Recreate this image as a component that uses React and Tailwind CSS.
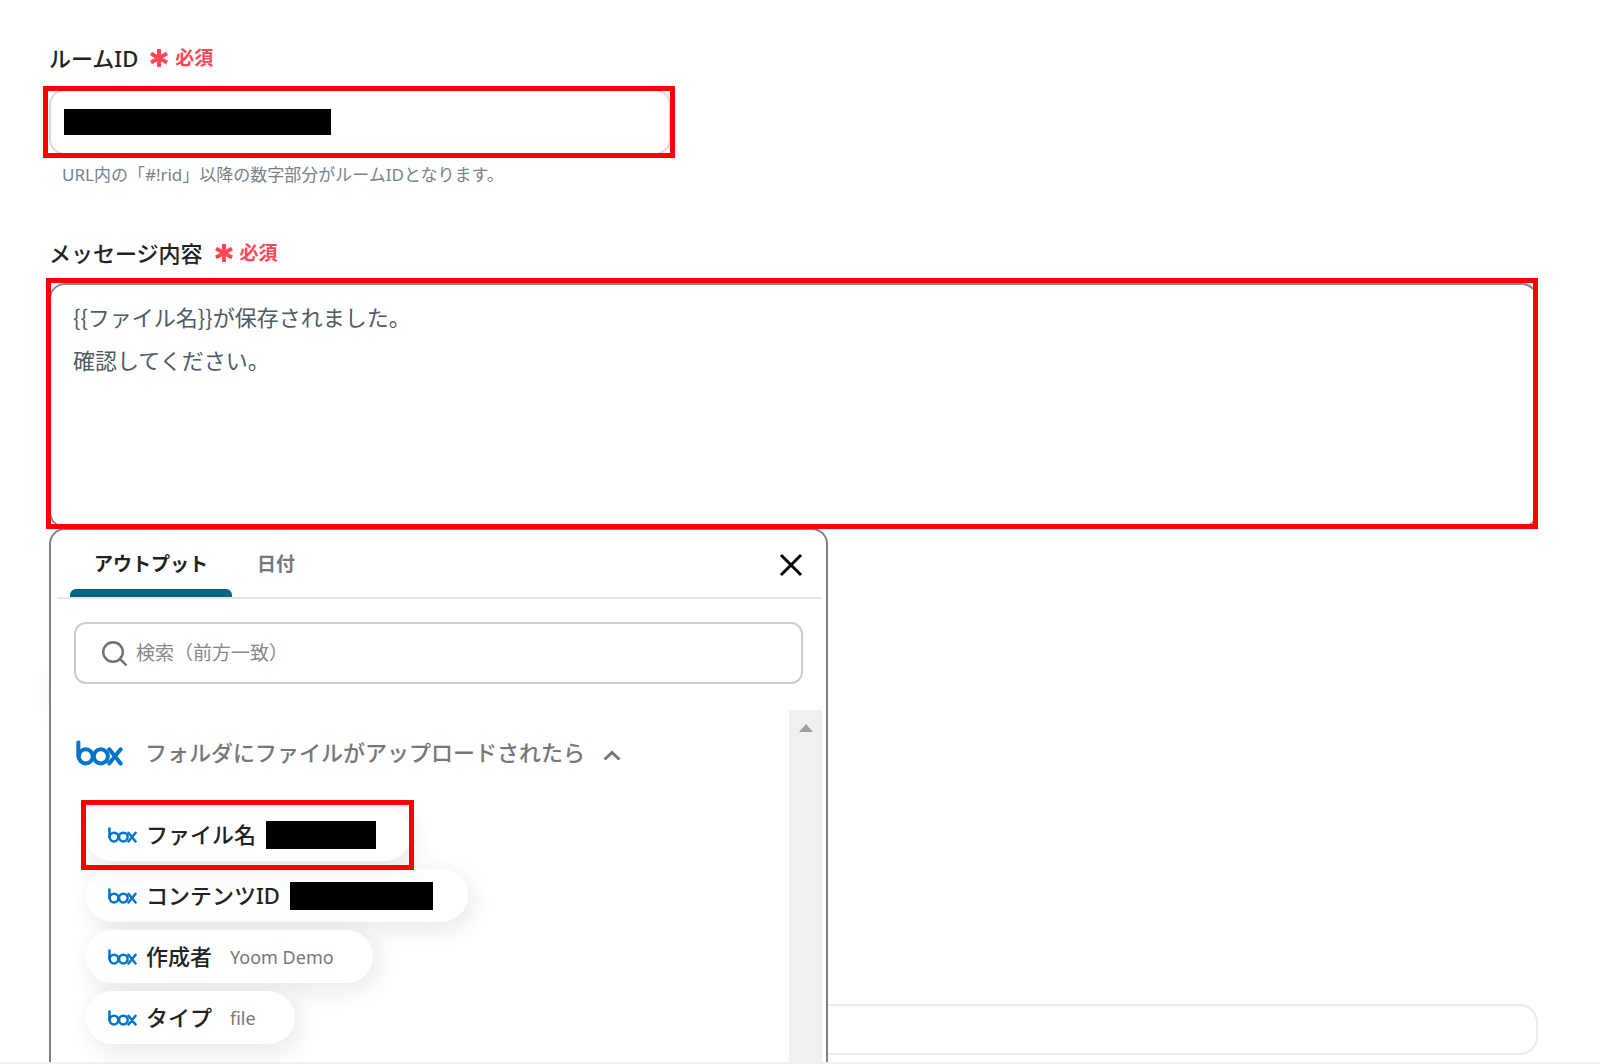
import React, { useState } from 'react';

const chips = [
    { label: 'ファイル名', barClass: 'w-[110px]' },
    { label: 'コンテンツID', barClass: 'w-[143px]' },
    { label: '作成者', value: 'Yoom Demo' },
    { label: 'タイプ', value: 'file' }
];

function BoxLogo({ className }) {
    return (
        <svg viewBox="0 0 140 76" className={className} fill="none" stroke="#0075c9" strokeWidth="12" strokeLinecap="round" aria-label="box" role="img">
            <path d="M7 7v41" />
            <circle cx="29" cy="48" r="21" />
            <circle cx="74" cy="48" r="21" />
            <path d="M99 27l34 42M133 27l-34 42" />
        </svg>
    );
}

function Required() {
    return (
        <span className="flex items-center gap-[7px] text-[19px] leading-7 font-bold text-[#ff4757]">
            <svg viewBox="0 0 18 18" className="w-[18px] h-[18px]" stroke="currentColor" strokeWidth="4" aria-hidden="true">
                <path d="M9 0v18M1 4.5l16 9M17 4.5l-16 9" />
            </svg>
            必須
        </span>
    );
}

function FieldLabel({ htmlFor, children }) {
    return (
        <div className="flex items-center gap-3">
            <label htmlFor={htmlFor} className="text-[22px] leading-8 font-medium text-[#222]">{children}</label>
            <Required />
        </div>
    );
}

// Annotation frame drawn over the element it marks
function Highlight({ className }) {
    return <div className={`absolute pointer-events-none border-[5px] border-[#ff0000] ${className}`} />;
}

function Chip({ label, value, barClass, marked }) {
    return (
        <li className={marked ? 'relative z-10' : 'relative'}>
            <button className="flex items-center h-[53px] pl-[22px] pr-[35px] rounded-full bg-white shadow-[4px_6px_28px_rgba(0,0,0,0.10)]">
                <BoxLogo className="w-[29px] h-4 mr-[9px]" />
                <span className="pb-0.5 text-[22px] leading-8 font-medium text-[#222]">{label}</span>
                {value && <span className="ml-[18px] pr-1 text-[18px] leading-7 text-[#777]">{value}</span>}
                {barClass && <span className={`h-7 ml-[10px] bg-black ${barClass}`} />}
            </button>
            {marked && <Highlight className="-left-[5px] -right-[3px] -top-[8px] -bottom-[9px]" />}
        </li>
    );
}

function OutputPicker() {
    const [tab, setTab] = useState('output');
    const [open, setOpen] = useState(true);

    return (
        <div className="absolute top-full left-0 w-[779px] pl-[6px] pr-1 bg-white border-2 border-b-0 border-[#808080] rounded-t-2xl">
            <div className="flex items-end h-[69px] pl-[13px] pr-[19px] border-b-2 border-[#e6e6e6]">
                <button
                    onClick={() => setTab('output')}
                    className="flex flex-col w-[162px] text-[19px] leading-7 font-bold text-[#222]"
                >
                    <span className="w-full pb-[11px]">アウトプット</span>
                    <span className={`w-full h-2 rounded-t-md ${tab === 'output' ? 'bg-[#05687f]' : ''}`} />
                </button>
                <button
                    onClick={() => setTab('date')}
                    className="flex flex-col px-[25px] text-[19px] leading-7 font-bold text-[#777]"
                >
                    <span className="w-full pb-[11px]">日付</span>
                    <span className={`w-full h-2 rounded-t-md ${tab === 'date' ? 'bg-[#05687f]' : ''}`} />
                </button>
                <button aria-label="閉じる" className="ml-auto mb-5">
                    <svg viewBox="0 0 24 24" className="w-6 h-6" fill="none" stroke="#000" strokeWidth="3">
                        <path d="M2 2l20 20M22 2L2 22" />
                    </svg>
                </button>
            </div>

            <div className="flex items-center h-[62px] mt-[23px] ml-[17px] mr-[19px] pl-[26px] border-2 border-[#ccc] rounded-xl">
                <svg viewBox="0 0 25 25" className="w-[25px] h-[25px]" fill="none" stroke="#707070" strokeWidth="2.4">
                    <circle cx="11" cy="11" r="9.8" />
                    <path d="M18 18l6.5 6.5" />
                </svg>
                <input
                    type="text"
                    aria-label="検索"
                    placeholder="検索（前方一致）"
                    className="flex-1 ml-[9px] text-[19px] leading-7 outline-none placeholder:text-[#888]"
                />
            </div>

            <div className="flex mt-[26px]">
                <div className="flex-1 pl-[19px] pt-[27px] pb-[18px]">
                    <button onClick={() => setOpen(!open)} className="flex items-center h-8">
                        <BoxLogo className="w-[47px] h-[26px] mr-[22px]" />
                        <span className="pb-0.5 text-[22px] leading-8 font-medium text-[#777]">フォルダにファイルがアップロードされたら</span>
                        <svg viewBox="0 0 18 11" className="w-[18px] h-[11px] ml-[18px] mt-1" fill="none" stroke="#777" strokeWidth="3">
                            <path d="M1.500 9.500L9 2.500l7.500 7" />
                        </svg>
                    </button>
                    {open && (
                        <ul className="flex flex-col items-start gap-2 mt-[39px] ml-[10px]">
                            {chips.map((chip, i) => (
                                <Chip key={chip.label} {...chip} marked={i === 0} />
                            ))}
                        </ul>
                    )}
                </div>
                <div className="flex justify-center w-[33px] pt-[14px] bg-[#f0f0f0]">
                    <svg viewBox="0 0 14 8" className="w-[14px] h-2" fill="#a0a0a0">
                        <path d="M7 0l7 8H0z" />
                    </svg>
                </div>
            </div>
        </div>
    );
}

export default function App() {
    return (
        <form
            onSubmit={(e) => e.preventDefault()}
            className="overflow-hidden pl-[49px] pr-[62px] pt-[42px] pb-[7px] bg-white border-b-2 border-[#efefef] font-['Noto_Sans','Noto_Sans_CJK_JP',sans-serif]"
        >
            <FieldLabel htmlFor="room-id">ルームID</FieldLabel>
            <div className="relative w-[622px] mt-[15px]">
                <input
                    id="room-id"
                    type="text"
                    className="block w-full h-[66px] border-2 border-[#d5dade] rounded-2xl"
                />
                <div className="absolute left-[15px] top-5 w-[267px] h-[26px] bg-black" />
                <Highlight className="-left-[6px] -right-1 -top-[3px] -bottom-[3px]" />
            </div>
            <p className="mt-[6px] pl-[13px] text-[17px] leading-7 text-[#77828b]">
                URL内の「#!rid」以降の数字部分がルームIDとなります。
            </p>

            <div className="mt-12">
                <FieldLabel htmlFor="message">メッセージ内容</FieldLabel>
            </div>
            <div className="relative mt-[14px]">
                <textarea
                    id="message"
                    defaultValue={'{{ファイル名}}が保存されました。\n確認してください。'}
                    className="block w-full h-[245px] px-[22px] py-[10px] border-2 border-[#8a8a8a] rounded-2xl resize-none outline-none font-['Noto_Sans_CJK_JP',sans-serif] text-[22px] leading-[43px] text-[#4f5b66]"
                />
                {/* soft shadow of the card the picker covers */}
                <div className="absolute left-0 top-[390px] w-40 h-10 rounded-full shadow-[0_0_28px_rgba(0,60,50,0.09)]" />
                <OutputPicker />
                <Highlight className="-left-[3px] right-0 -top-[5px] -bottom-[1px]" />
            </div>

            <input
                type="text"
                aria-label="ファイル"
                className="block w-full h-[51px] mt-[476px] border-2 border-[#ebebeb] rounded-[18px]"
            />
        </form>
    );
}
